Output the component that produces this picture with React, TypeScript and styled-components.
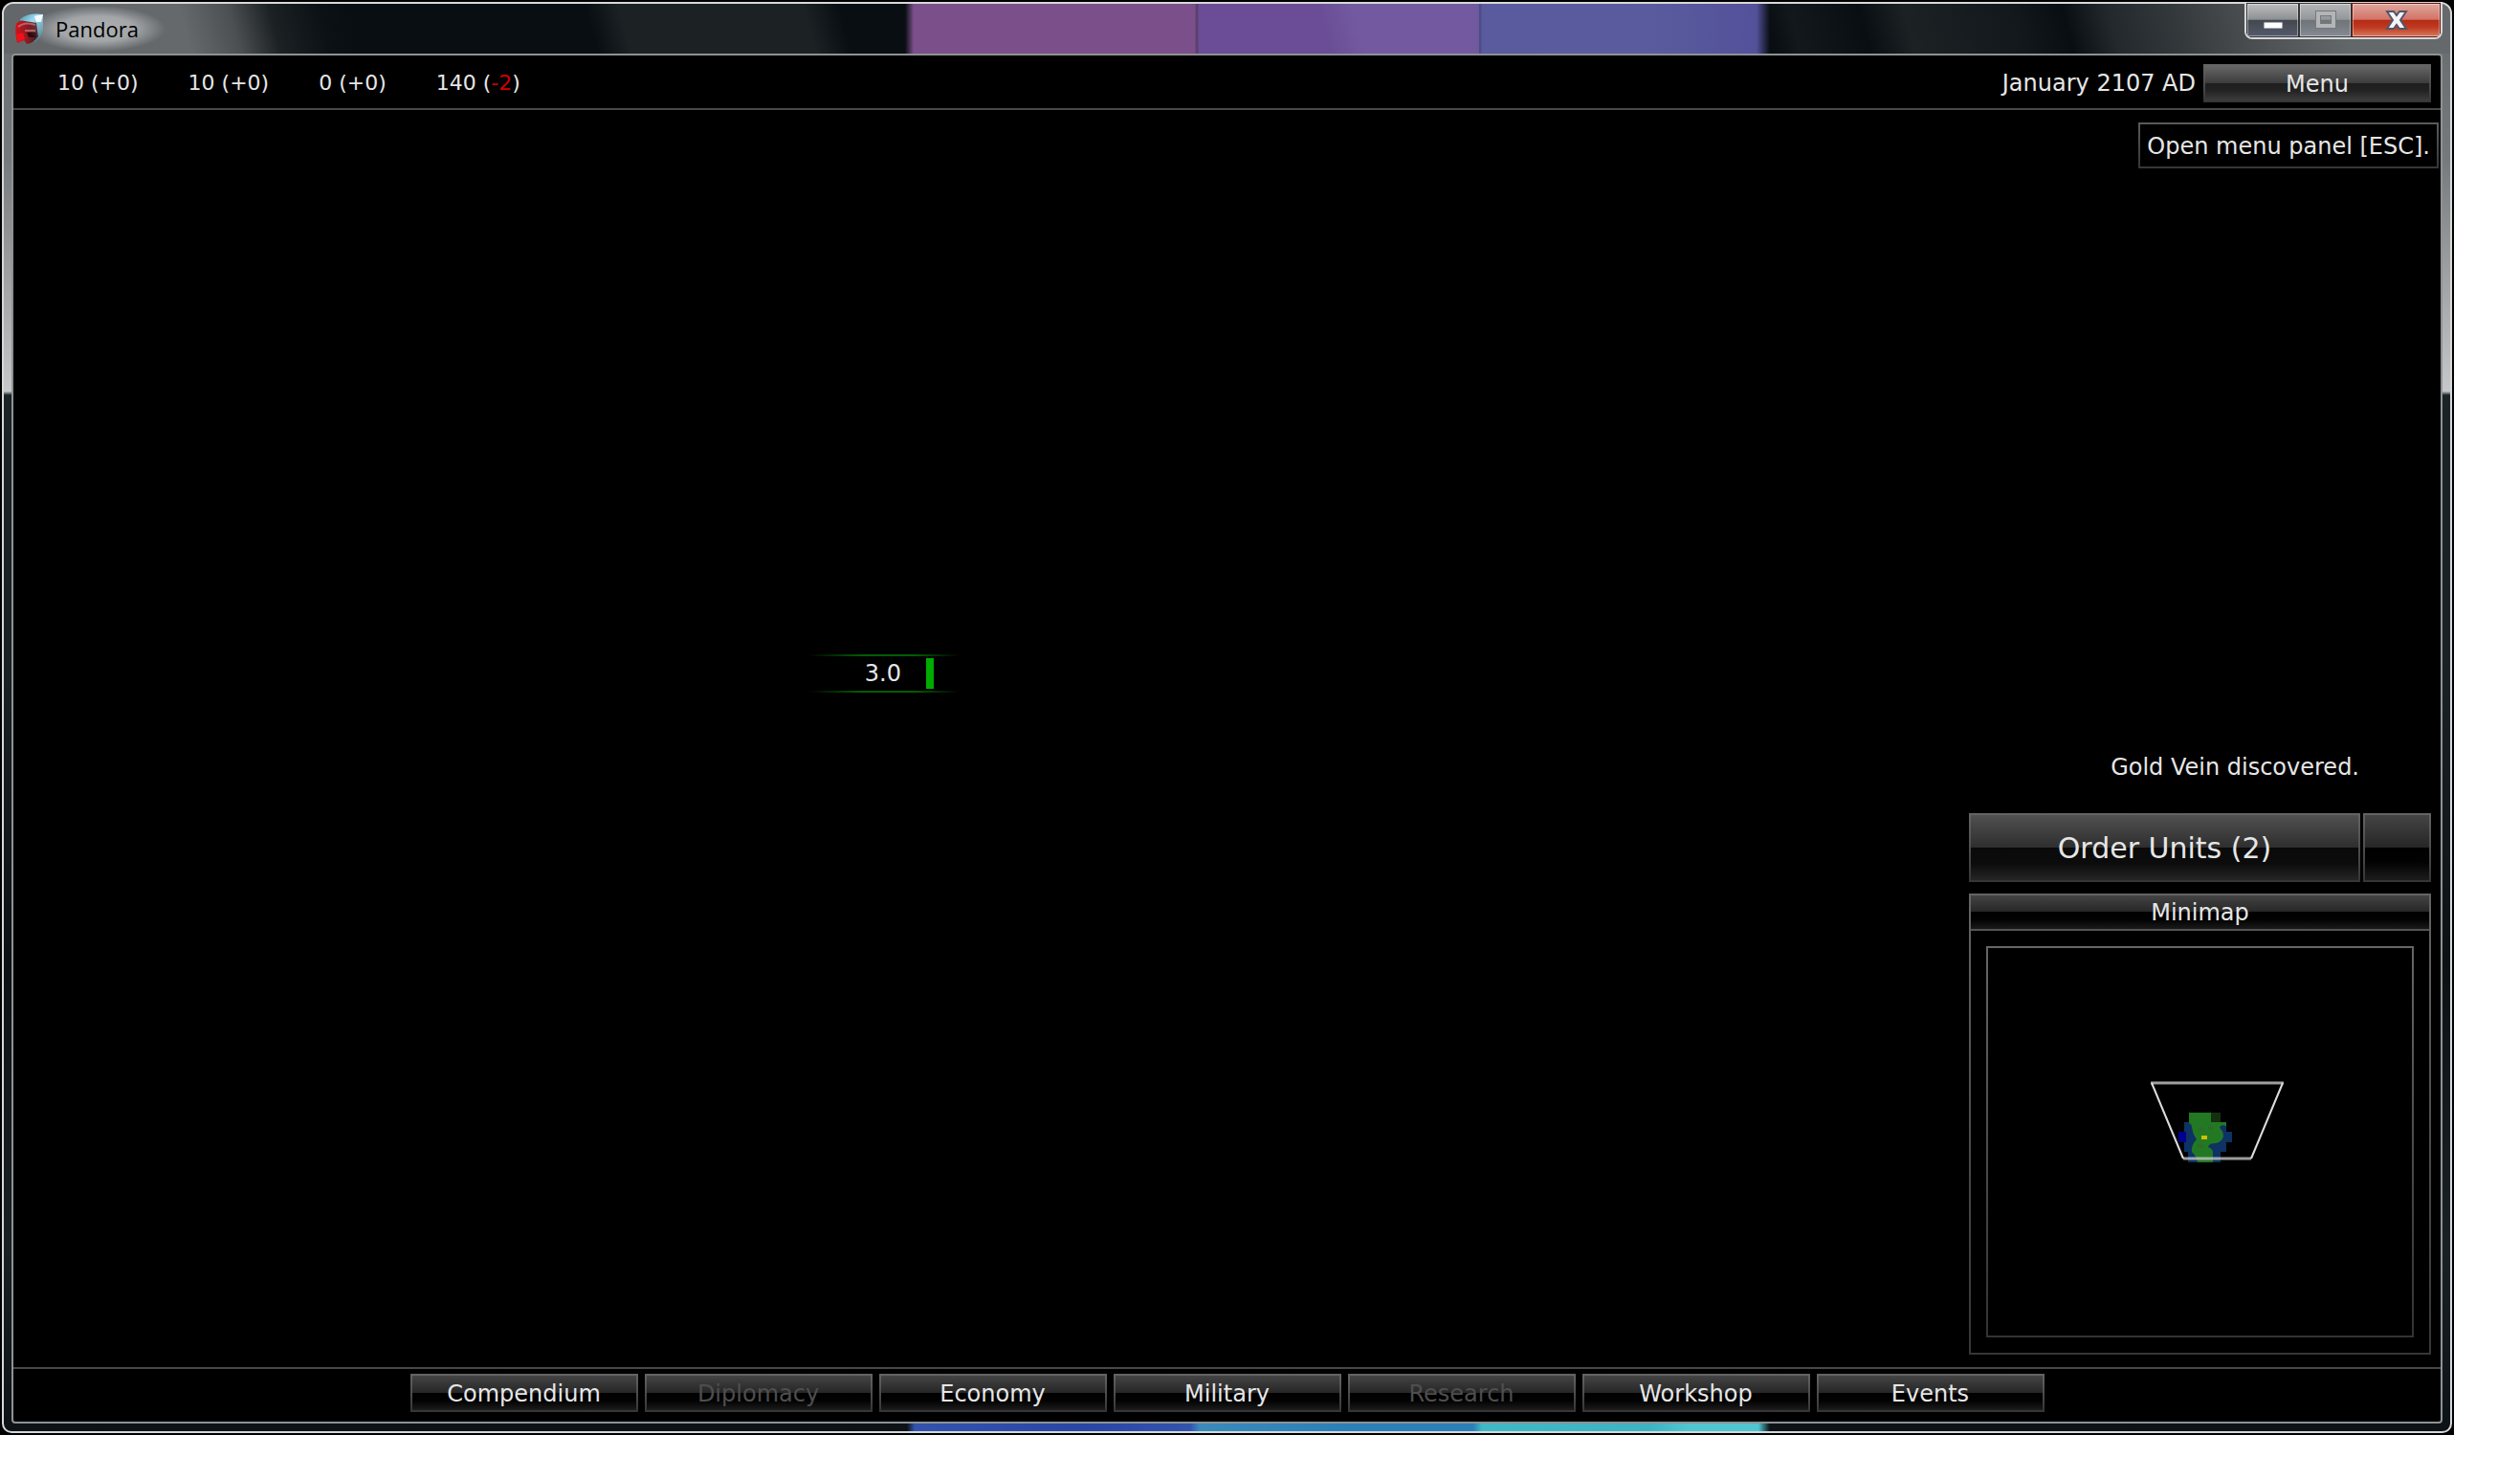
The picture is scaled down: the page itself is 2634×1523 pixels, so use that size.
import React from "react";
import styled, { createGlobalStyle } from "styled-components";

const GlobalStyle = createGlobalStyle`
  *, *::before, *::after { box-sizing: border-box; }
  body { margin: 0; background: #fff; }
  button { font: inherit; margin: 0; cursor: pointer; }
`;

const Page = styled.div`
  min-height: 100vh;
  display: flex;
  padding: 0 69px 23px 0;
  font-family: "DejaVu Sans", "Liberation Sans", sans-serif;
  font-size: 24px;
  line-height: 32px;
  color: #e6e6e6;
`;

const Desktop = styled.div`
  flex: 1;
  display: flex;
  padding: 2px;
  background: #000;
`;

const Frame = styled.div`
  flex: 1;
  display: flex;
  flex-direction: column;
  padding: 0 8px 8px;
  border: 2px solid #d6d8d9;
  border-radius: 12px 12px 10px 10px;
  background:
    linear-gradient(90deg, transparent 944px, #3353ae 952px, #2a45a5 1130px, #3353ae 1240px, #3a8abc 1250px, #2b80b8 1400px, #2b80b8 1536px, #3fb9c6 1545px, #3db3c1 1720px, #4fc6d2 1760px, #4fc6d2 1834px, transparent 1846px) bottom / 100% 10px no-repeat,
    linear-gradient(180deg, #666a6c 0, #76797b 160px, #c6c7c8 405px, #1c2327 409px, #1a2125 700px, #0c1114 1000px, #1a2125 1300px, #0c1216 100%);
`;

const TitleBar = styled.header`
  height: 52px;
  margin: 0 -8px;
  padding: 0 8px 0 12px;
  display: flex;
  align-items: center;
  gap: 12px;
  border-radius: 10px 10px 0 0;
  background:
    linear-gradient(90deg, transparent 942px, #7a4f8a 951px, #7a4f8a 1245px, transparent 1249px),
    linear-gradient(90deg, transparent 1539px, #5a5a9e 1545px, #5a5b9e 1720px, #53519a 1832px, transparent 1846px),
    linear-gradient(75deg, transparent 1340px, #735aa0 1375px, #735aa0 1550px, transparent 1552px) 0 0 / 1542px 100% no-repeat,
    linear-gradient(90deg, transparent 1245px, #6a4d96 1249px, #6a4d96 1541px, transparent 1545px),
    linear-gradient(75deg, #63676a 0, #66696b 190px, #4b4f52 240px, #1c2124 280px, #0c1115 330px, #090e12 360px, #090e12 600px, #1c2124 634px, #1c2124 820px, #090e12 856px, #090e12 1790px, #12181b 1815px, #090e12 1885px, #1c2124 1930px, #12181b 2040px, #090e12 2090px, #22282c 2135px, #33383b 2200px, #505356 2290px, #62676a 2370px, #666a6c 100%);
`;

const AppIcon = styled.svg`
  width: 30px;
  height: 32px;
`;

const Title = styled.h1`
  margin: 0 auto 0 -28px;
  padding: 0 28px;
  font: 400 22px/48px "Open Sans", "Noto Sans", sans-serif;
  color: #000;
  background: radial-gradient(closest-side, rgba(205, 207, 209, 0.7) 0, rgba(205, 207, 209, 0.6) 55%, transparent 100%);
`;

const Captions = styled.div`
  align-self: flex-start;
  display: flex;
  height: 39px;
  margin-top: -2px;
  border: 2px solid #d6d8d9;
  border-top-width: 1px;
  border-radius: 0 0 8px 8px;
  background: #1d2124;
  overflow: hidden;
`;

const Caption = styled.button<{ $kind?: "close" | "off" }>`
  width: ${(p) => (p.$kind === "close" ? 93 : 55)}px;
  padding: 0;
  display: grid;
  place-items: center;
  border: 1px solid ${(p) => (p.$kind === "close" ? "#6d1710" : "#33373a")};
  box-shadow: inset 0 0 0 1px rgba(255, 255, 255, 0.4);
  background: ${(p) =>
    p.$kind === "close"
      ? "linear-gradient(#e0a69c 0, #d37366 48%, #b52a14 50%, #bf3a20 72%, #d4785c 100%)"
      : p.$kind === "off"
        ? "linear-gradient(#b4b6b8 0, #94979a 48%, #6f7478 50%, #858a94 100%)"
        : "linear-gradient(#bcbebf 0, #8d9092 48%, #43484c 50%, #555a6c 100%)"};
`;

const Game = styled.main`
  flex: 1;
  display: flex;
  flex-direction: column;
  border: 2px solid #8d9295;
  border-radius: 4px;
  background: #000;
`;

const StatusBar = styled.div`
  height: 57px;
  display: flex;
  align-items: center;
  gap: 8px;
  padding: 2px 10px 0 46px;
  border-bottom: 2px solid #484848;
`;

const Resources = styled.ul`
  list-style: none;
  margin: 0 auto 0 0;
  padding: 0;
  display: flex;
  gap: 52px;
  font-size: 22px;
`;

const Loss = styled.span`
  color: #d00000;
`;

const GameButton = styled.button<{ $look?: "hover" | "large" }>`
  padding: 2px 0 0;
  color: #e6e6e6;
  border: 2px solid;
  border-image: linear-gradient(#646464, #363636) 1;
  background: ${(p) =>
    p.$look === "hover"
      ? "linear-gradient(#666 0, #3c3c3c 50%, #1e1e1e 50%, #222 70%, #3c3c3c 100%)"
      : p.$look === "large"
        ? "linear-gradient(#505050 0, #2e2e2e 50%, #0a0a0a 50%, #0c0c0c 75%, #262626 100%)"
        : "linear-gradient(#444 0, #262626 50%, #000 50%, #020202 72%, #1c1c1c 100%)"};
  &:disabled { color: #4e4e4e; cursor: default; }
`;

const MenuButton = styled(GameButton)`
  width: 238px;
  height: 40px;
`;

const Field = styled.section`
  flex: 1;
  position: relative;
  display: flex;
  flex-direction: column;
  align-items: flex-end;
  justify-content: flex-end;
  padding: 0 10px 13px;
`;

const Tooltip = styled.div`
  position: absolute;
  top: 13px;
  right: 2px;
  padding: 7px 7px 5px;
  border: 2px solid;
  border-image: linear-gradient(#5a5a5a, #363636) 1;
`;

const Unit = styled.div`
  position: absolute;
  left: 831px;
  top: 569px;
  width: 158px;
  height: 40px;
  display: flex;
  align-items: center;
  justify-content: flex-end;
  gap: 26px;
  padding-right: 27px;
  background:
    linear-gradient(90deg, transparent, #045c04 35%, #045c04 70%, transparent) top / 100% 2px no-repeat,
    linear-gradient(90deg, transparent, #045c04 35%, #045c04 70%, transparent) bottom / 100% 2px no-repeat;
`;

const Health = styled.span`
  width: 8px;
  height: 32px;
  background: #00ac00;
`;

const Sidebar = styled.aside`
  width: 483px;
  display: flex;
  flex-direction: column;
  gap: 12px;
`;

const Message = styled.p`
  margin: 0 0 20px;
  padding-right: 75px;
  text-align: right;
`;

const Orders = styled.div`
  display: flex;
  gap: 3px;
  height: 72px;
  font-size: 30px;
`;

const OrderButton = styled(GameButton)`
  flex: 1;
`;

const SkipButton = styled(GameButton)`
  width: 71px;
`;

const MapPanel = styled.section`
  border: 2px solid;
  border-image: linear-gradient(#646464, #363636) 1;
`;

const MapTitle = styled.h2`
  margin: 0;
  height: 37px;
  padding-top: 2px;
  font-size: 24px;
  font-weight: 400;
  line-height: 33px;
  text-align: center;
  border-bottom: 2px solid #545454;
  background: linear-gradient(#444 0, #262626 50%, #000 50%, #020202 72%, #1a1a1a 100%);
`;

const MapView = styled.svg`
  display: block;
  width: 447px;
  height: 409px;
  margin: 16px;
  border: 2px solid;
  border-image: linear-gradient(#666, #333) 1;
`;

const Toolbar = styled.nav`
  height: 57px;
  display: flex;
  justify-content: center;
  align-items: flex-start;
  gap: 7px;
  padding: 5px 10px 0;
  border-top: 2px solid #484848;
`;

const ToolButton = styled(GameButton)`
  flex: 0 1 238px;
  height: 40px;
`;

const resources = ["10 (+0)", "10 (+0)", "0 (+0)"];

const tools = [
  { name: "Compendium" },
  { name: "Diplomacy", off: true },
  { name: "Economy" },
  { name: "Military" },
  { name: "Research", off: true },
  { name: "Workshop" },
  { name: "Events" },
];

function PandoraIcon() {
  return (
    <AppIcon viewBox="0 0 30 32" aria-hidden="true">
      <defs>
        <linearGradient id="lid" x1="0" y1="0" x2="1" y2="1">
          <stop offset="0" stopColor="#4c93a8" />
          <stop offset="0.4" stopColor="#9fdcf2" />
          <stop offset="1" stopColor="#1f6478" />
        </linearGradient>
        <linearGradient id="box" x1="0" y1="0" x2="1" y2="0">
          <stop offset="0" stopColor="#d3121a" />
          <stop offset="0.5" stopColor="#8e1c22" />
          <stop offset="1" stopColor="#3a1a20" />
        </linearGradient>
      </defs>
      <path d="M5 6 Q14 -1 29 1 L29 17 Q27 26 20 30 L8 20 Z" fill="url(#lid)" />
      <path d="M1 11 Q5 6 10 8 L22 10 L24 24 Q19 31 12 32 L9 28 L2 31 Q-1 19 1 11 Z" fill="url(#box)" />
      <path d="M3 14 Q10 8 21 12 M10 18 H21" fill="none" stroke="#d98a90" strokeWidth="2" opacity="0.6" />
      <path d="M12 20 H22 V25 H14 Z" fill="#2b0b10" />
      <path d="M1 22 L8 20 L10 27 L3 30 Z" fill="#f01018" />
      <path d="M20 3 L29 1 L27 9 L22 9 Z" fill="#f4fdff" />
    </AppIcon>
  );
}

function Minimap() {
  return (
    <MapView viewBox="0 0 443 405" role="img" aria-label="Minimap">
      <g shapeRendering="crispEdges">
        <path d="M210 182H205V192H199V203H205V213H209V224H243V213H249V203H255V192H249V182Z" fill="#0d3263" />
        <path d="M199 192H207V203H199Z" fill="#00008c" />
        <path d="M233 172H243V182H233Z" fill="#16300f" />
      </g>
      <path d="M210 172H233V182H249V186Q243 184 242 188Q246 191 246 197Q244 203 238 204Q231 204 230 208Q236 210 235 216V224H219Q218 218 213 213Q212 206 218 200Q214 195 213 187Q213 184 210 183Z" fill="#237923" />
      <path d="M220 189H226M230 188H236M218 207H226" stroke="#2f6a29" strokeWidth="3" />
      <path d="M223 196H229V200H223Z" fill="#cdbf00" />
      <g fill="none">
        <path d="M170 141H309" stroke="#a0a0a0" strokeWidth="3" />
        <path d="M204 220H275" stroke="#c4c4c4" strokeOpacity="0.8" strokeWidth="3" />
        <path d="M171 141L204 220M308 141L275 220" stroke="#dcdcdc" strokeWidth="2" />
      </g>
    </MapView>
  );
}

export default function App() {
  return (
    <Page>
      <GlobalStyle />
      <Desktop>
        <Frame>
          <TitleBar>
            <PandoraIcon />
            <Title>Pandora</Title>
            <Captions>
              <Caption aria-label="Minimize">
                <svg width="22" height="24" aria-hidden="true">
                  <rect x="1" y="14" width="20" height="7" fill="#fff" stroke="#50566c" />
                </svg>
              </Caption>
              <Caption $kind="off" aria-label="Maximize" disabled>
                <svg width="22" height="20" aria-hidden="true">
                  <rect x="3" y="3" width="16" height="13" fill="none" stroke="#75797c" strokeWidth="6" />
                  <rect x="3" y="3" width="16" height="13" fill="none" stroke="#b3b5b6" strokeWidth="4" />
                </svg>
              </Caption>
              <Caption $kind="close" aria-label="Close">
                <svg width="24" height="22" viewBox="0 0 24 22" aria-hidden="true">
                  <path d="M2 2H9L12 6L15 2H22L16 11L22 20H15L12 16L9 20H2L8 11Z" fill="#f4f4f4" stroke="#50566c" strokeWidth="2" />
                </svg>
              </Caption>
            </Captions>
          </TitleBar>
          <Game>
            <StatusBar>
              <Resources>
                {resources.map((value, i) => (
                  <li key={i}>{value}</li>
                ))}
                <li>
                  140 (<Loss>-2</Loss>)
                </li>
              </Resources>
              <span>January 2107 AD</span>
              <MenuButton $look="hover">Menu</MenuButton>
            </StatusBar>
            <Field>
              <Tooltip role="tooltip">Open menu panel [ESC].</Tooltip>
              <Unit>
                <span>3.0</span>
                <Health />
              </Unit>
              <Sidebar>
                <Message>Gold Vein discovered.</Message>
                <Orders>
                  <OrderButton $look="large">Order Units (2)</OrderButton>
                  <SkipButton aria-label="Skip order" />
                </Orders>
                <MapPanel>
                  <MapTitle>Minimap</MapTitle>
                  <Minimap />
                </MapPanel>
              </Sidebar>
            </Field>
            <Toolbar>
              {tools.map((tool) => (
                <ToolButton key={tool.name} disabled={tool.off}>
                  {tool.name}
                </ToolButton>
              ))}
            </Toolbar>
          </Game>
        </Frame>
      </Desktop>
    </Page>
  );
}
